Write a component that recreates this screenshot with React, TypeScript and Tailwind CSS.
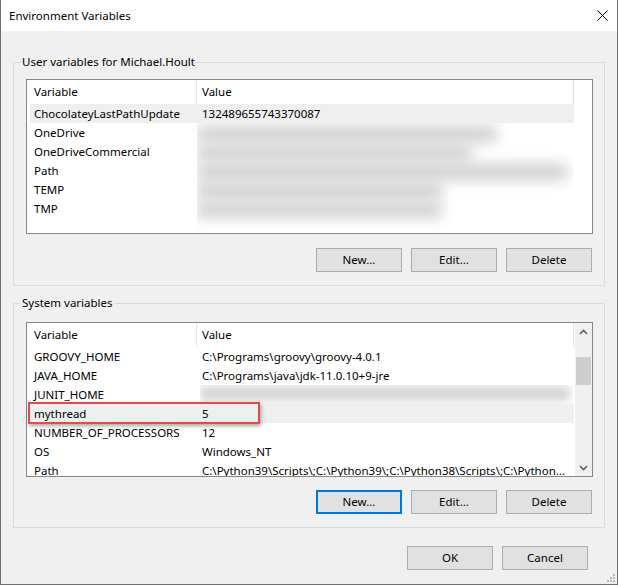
import React from "react";

const FONT = "font-['Noto_Sans',sans-serif]";

function Btn({ label, focused }: { label: string; focused?: boolean }) {
  return (
    <button
      className={
        focused
          ? "w-[86px] h-[24px] bg-[#e1e1e1] border-2 border-[#0078d7] text-[11.5px] text-black leading-none"
          : "w-[86px] h-[24px] bg-[#e1e1e1] border border-[#adadad] text-[11.5px] text-black leading-none"
      }
    >
      {label}
    </button>
  );
}

function Header() {
  return (
    <div className="flex h-[24px] shrink-0 items-center">
      <div className="w-[167px] h-full pl-[4px] flex items-center border-r border-[#e5e5e5]">Variable</div>
      <div className="w-[377px] h-full pl-[5px] flex items-center border-r border-[#e5e5e5]">Value</div>
    </div>
  );
}

function Row({ name, value, selected }: { name: string; value?: string; selected?: boolean }) {
  return (
    <div
      className={
        selected
          ? "flex h-[19px] shrink-0 items-center bg-[#efefef] w-[544px]"
          : "flex h-[19px] shrink-0 items-center w-[544px]"
      }
    >
      <div className="w-[167px] pl-[4px] whitespace-nowrap overflow-hidden">{name}</div>
      <div className="w-[377px] pl-[5px] whitespace-nowrap overflow-hidden text-ellipsis">{value}</div>
    </div>
  );
}

function Group({ label, children }: { label: string; children: React.ReactNode }) {
  return (
    <div className="relative ml-[12px] w-[592px] border border-[#dcdcdc]">
      <div className="absolute left-[7px] top-[-9px] px-[1px] bg-[#f0f0f0] leading-[16px]">{label}</div>
      {children}
    </div>
  );
}

function Chevron({ up }: { up?: boolean }) {
  return (
    <svg width="9" height="6" viewBox="0 0 9 6">
      {up ? (
        <path d="M1 5 L4.5 1.5 L8 5" fill="none" stroke="#606060" strokeWidth="1.6" />
      ) : (
        <path d="M1 1 L4.5 4.5 L8 1" fill="none" stroke="#606060" strokeWidth="1.6" />
      )}
    </svg>
  );
}

export default function App() {
  return (
    <div className={`${FONT} text-[11.5px] text-black w-[618px] h-[585px] bg-[#f0f0f0] border-x border-b border-[#707070] relative flex flex-col`}>
      {/* Title bar */}
      <div className="h-[31px] bg-white flex items-center justify-between pl-[8px] pr-[9px] shrink-0">
        <span>Environment Variables</span>
        <svg width="11" height="11" viewBox="0 0 11 11">
          <path d="M0.5 0.5 L10.5 10.5 M10.5 0.5 L0.5 10.5" stroke="#000" strokeWidth="1" />
        </svg>
      </div>

      {/* User variables */}
      <div className="mt-[31px]">
        <Group label="User variables for Michael.Hoult">
          <div className="pt-[16px] pl-[12px] pb-[13px]">
            <div className="w-[567px] h-[155px] border border-[#828790] bg-white overflow-hidden pl-[3px] flex flex-col">
              <Header />
              <Row name="ChocolateyLastPathUpdate" value="132489655743370087" selected />
              <div className="flex">
                <div className="w-[167px] flex flex-col">
                  {["OneDrive", "OneDriveCommercial", "Path", "TEMP", "TMP"].map((n) => (
                    <div key={n} className="h-[19px] pl-[4px] flex items-center">{n}</div>
                  ))}
                </div>
                <div className="w-[377px] h-[110px] overflow-hidden flex flex-col pt-[1px]">
                  <div className="h-[19px] flex items-center"><div className="h-[16px] w-[300px] bg-[#cfcfcf] blur-[7px]" /></div>
                  <div className="h-[19px] flex items-center"><div className="h-[16px] w-[275px] bg-[#d0d0d0] blur-[7px]" /></div>
                  <div className="h-[19px] flex items-center"><div className="h-[16px] w-[370px] bg-[#cfcfcf] blur-[7px]" /></div>
                  <div className="h-[19px] flex items-center"><div className="h-[16px] w-[245px] bg-[#cecece] blur-[7px]" /></div>
                  <div className="h-[19px] flex items-center"><div className="h-[16px] w-[245px] bg-[#d0d0d0] blur-[7px]" /></div>
                </div>
              </div>
            </div>
            <div className="flex justify-end gap-[9px] mt-[14px] pr-[12px]">
              <Btn label="New..." />
              <Btn label="Edit..." />
              <Btn label="Delete" />
            </div>
          </div>
        </Group>
      </div>

      {/* System variables */}
      <div className="mt-[17px]">
        <Group label="System variables">
          <div className="pt-[18px] pl-[12px] pb-[13px]">
            <div className="relative w-[567px] h-[155px] border border-[#828790] bg-white flex">
              <div className="w-[548px] pl-[3px] overflow-hidden flex flex-col">
                <Header />
                <Row name="GROOVY_HOME" value="C:\Programs\groovy\groovy-4.0.1" />
                <Row name="JAVA_HOME" value="C:\Programs\java\jdk-11.0.10+9-jre" />
                <div className="flex h-[19px] shrink-0 items-center w-[544px]">
                  <div className="w-[167px] pl-[4px]">JUNIT_HOME</div>
                  <div className="w-[374px] h-[19px] ml-[3px] overflow-hidden flex items-start pt-[1px]">
                    <div className="h-[15px] w-[370px] bg-[#d4d4d4] blur-[5px]" />
                  </div>
                </div>
                <Row name="mythread" value="5" selected />
                <Row name="NUMBER_OF_PROCESSORS" value="12" />
                <Row name="OS" value="Windows_NT" />
                <Row name="Path" value="C:\Python39\Scripts\;C:\Python39\;C:\Python38\Scripts\;C:\Python..." />
              </div>
              <div className="w-[17px] bg-[#f0f0f0] flex flex-col items-center">
                <div className="h-[17px] flex items-center justify-center"><Chevron up /></div>
                <div className="flex-1 w-full px-[1px] pt-[17px]">
                  <div className="h-[28px] bg-[#cdcdcd]" />
                </div>
                <div className="h-[17px] flex items-center justify-center"><Chevron /></div>
              </div>
              <div className="absolute left-[1px] top-[79px] w-[232px] h-[22px] border-2 border-[#e8484b] shadow-[1px_2px_4px_rgba(0,0,0,0.35)]" />
            </div>
            <div className="flex justify-end gap-[9px] mt-[13px] pr-[12px]">
              <Btn label="New..." focused />
              <Btn label="Edit..." />
              <Btn label="Delete" />
            </div>
          </div>
        </Group>
      </div>

      {/* OK / Cancel */}
      <div className="flex justify-end gap-[9px] mt-[18px] pr-[29px]">
        <Btn label="OK" />
        <Btn label="Cancel" />
      </div>

      <svg className="absolute right-[1px] bottom-[1px]" width="10" height="10" viewBox="0 0 10 10">
        <rect x="7" y="1" width="2" height="2" fill="#bcbcbc" />
        <rect x="4" y="4" width="2" height="2" fill="#bcbcbc" />
        <rect x="7" y="4" width="2" height="2" fill="#bcbcbc" />
        <rect x="1" y="7" width="2" height="2" fill="#bcbcbc" />
        <rect x="4" y="7" width="2" height="2" fill="#bcbcbc" />
        <rect x="7" y="7" width="2" height="2" fill="#bcbcbc" />
      </svg>
    </div>
  );
}
